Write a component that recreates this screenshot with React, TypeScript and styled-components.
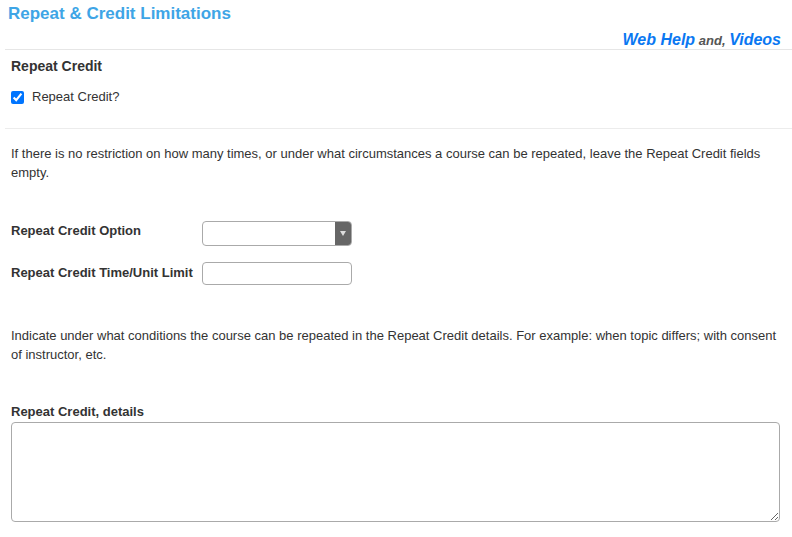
import React from "react";
import styled, { createGlobalStyle } from "styled-components";

const GlobalStyle = createGlobalStyle`
  body {
    margin: 0;
    background: #fff;
    font-family: "Liberation Sans", Arial, sans-serif;
    font-size: 13px;
    color: #333;
  }
`;

const Page = styled.div`
  width: 792px;
  padding: 0 0 0 5px;
  box-sizing: border-box;
`;

const Header = styled.div`
  border-bottom: 1px solid #e6e6e6;
  padding: 4px 0 0 3px;
  height: 50px;
  box-sizing: border-box;
  display: flex;
  flex-direction: column;
`;

const Title = styled.h1`
  margin: 0;
  font-size: 17px;
  line-height: 20px;
  font-weight: bold;
  color: #3ea5e6;
`;

const HelpLinks = styled.div`
  align-self: flex-end;
  margin: 7px 11px 0 0;
  font-style: italic;
  font-weight: bold;
  line-height: 18px;
`;

const HelpLink = styled.a`
  color: #0a78f2;
  font-size: 16px;
  text-decoration: none;
`;

const HelpJoin = styled.span`
  color: #555;
  font-size: 13px;
`;

const Section = styled.div<{ $divider?: boolean }>`
  padding: 0 0 0 6px;
  border-bottom: ${(p) => (p.$divider ? "1px solid #ececec" : "none")};
`;

const SectionTitle = styled.h2`
  margin: 0;
  padding-top: 7px;
  font-size: 14px;
  line-height: 18px;
  font-weight: bold;
  color: #333;
`;

const CheckRow = styled.label`
  display: flex;
  align-items: center;
  gap: 8px;
  margin: 14px 0 0 0;
  padding-bottom: 23px;
  line-height: 16px;
  color: #333;

  input {
    margin: 0;
    width: 13px;
    height: 13px;
  }
`;

const Note = styled.p<{ $top: number }>`
  margin: ${(p) => p.$top}px 0 0 0;
  line-height: 19px;
  color: #333;
  padding-right: 8px;
`;

const FieldGrid = styled.div`
  display: grid;
  grid-template-columns: 191px 150px;
  row-gap: 16px;
  align-items: start;
  margin-top: 39px;
`;

const FieldLabel = styled.label<{ $offset?: number }>`
  display: block;
  padding-top: ${(p) => p.$offset ?? 0}px;
  font-weight: bold;
  color: #333;
  line-height: 16px;
`;

const SelectBox = styled.div`
  height: 25px;
  border: 1px solid #aaa;
  border-radius: 4px;
  box-sizing: border-box;
  background: #fff;
  overflow: hidden;
  display: flex;
`;

const SelectValue = styled.div`
  flex: 1;
`;

const SelectArrow = styled.div`
  width: 16px;
  background: #666;
  display: flex;
  align-items: center;
  justify-content: center;

  &::after {
    content: "";
    border-left: 3.5px solid transparent;
    border-right: 3.5px solid transparent;
    border-top: 5px solid #ddd;
  }
`;

const TextInput = styled.input`
  height: 23px;
  width: 150px;
  border: 1px solid #aaa;
  border-radius: 4px;
  box-sizing: border-box;
  padding: 2px 6px;
  font: inherit;
`;

const DetailsLabel = styled(FieldLabel)`
  margin-top: 40px;
`;

const DetailsArea = styled.textarea`
  display: block;
  margin-top: 2px;
  width: 769px;
  height: 100px;
  border: 1px solid #aaa;
  border-radius: 4px;
  box-sizing: border-box;
  font: inherit;
  padding: 4px 6px;
`;

export default function App() {
  return (
    <>
      <GlobalStyle />
      <Page>
        <Header>
          <Title>Repeat &amp; Credit Limitations</Title>
          <HelpLinks>
            <HelpLink href="#">Web Help</HelpLink> <HelpJoin>and,</HelpJoin>{" "}
            <HelpLink href="#">Videos</HelpLink>
          </HelpLinks>
        </Header>

        <Section $divider>
          <SectionTitle>Repeat Credit</SectionTitle>
          <CheckRow>
            <input type="checkbox" defaultChecked />
            Repeat Credit?
          </CheckRow>
        </Section>

        <Section>
          <Note $top={15}>
            If there is no restriction on how many times, or under what circumstances a course can be repeated,
            leave the Repeat Credit fields empty.
          </Note>

          <FieldGrid>
            <FieldLabel $offset={2}>Repeat Credit Option</FieldLabel>
            <SelectBox>
              <SelectValue />
              <SelectArrow />
            </SelectBox>
            <FieldLabel $offset={3}>Repeat Credit Time/Unit Limit</FieldLabel>
            <TextInput type="text" />
          </FieldGrid>

          <Note $top={41}>
            Indicate under what conditions the course can be repeated in the Repeat Credit details. For example:
            when topic differs; with consent of instructor, etc.
          </Note>

          <DetailsLabel>Repeat Credit, details</DetailsLabel>
          <DetailsArea />
        </Section>
      </Page>
    </>
  );
}
